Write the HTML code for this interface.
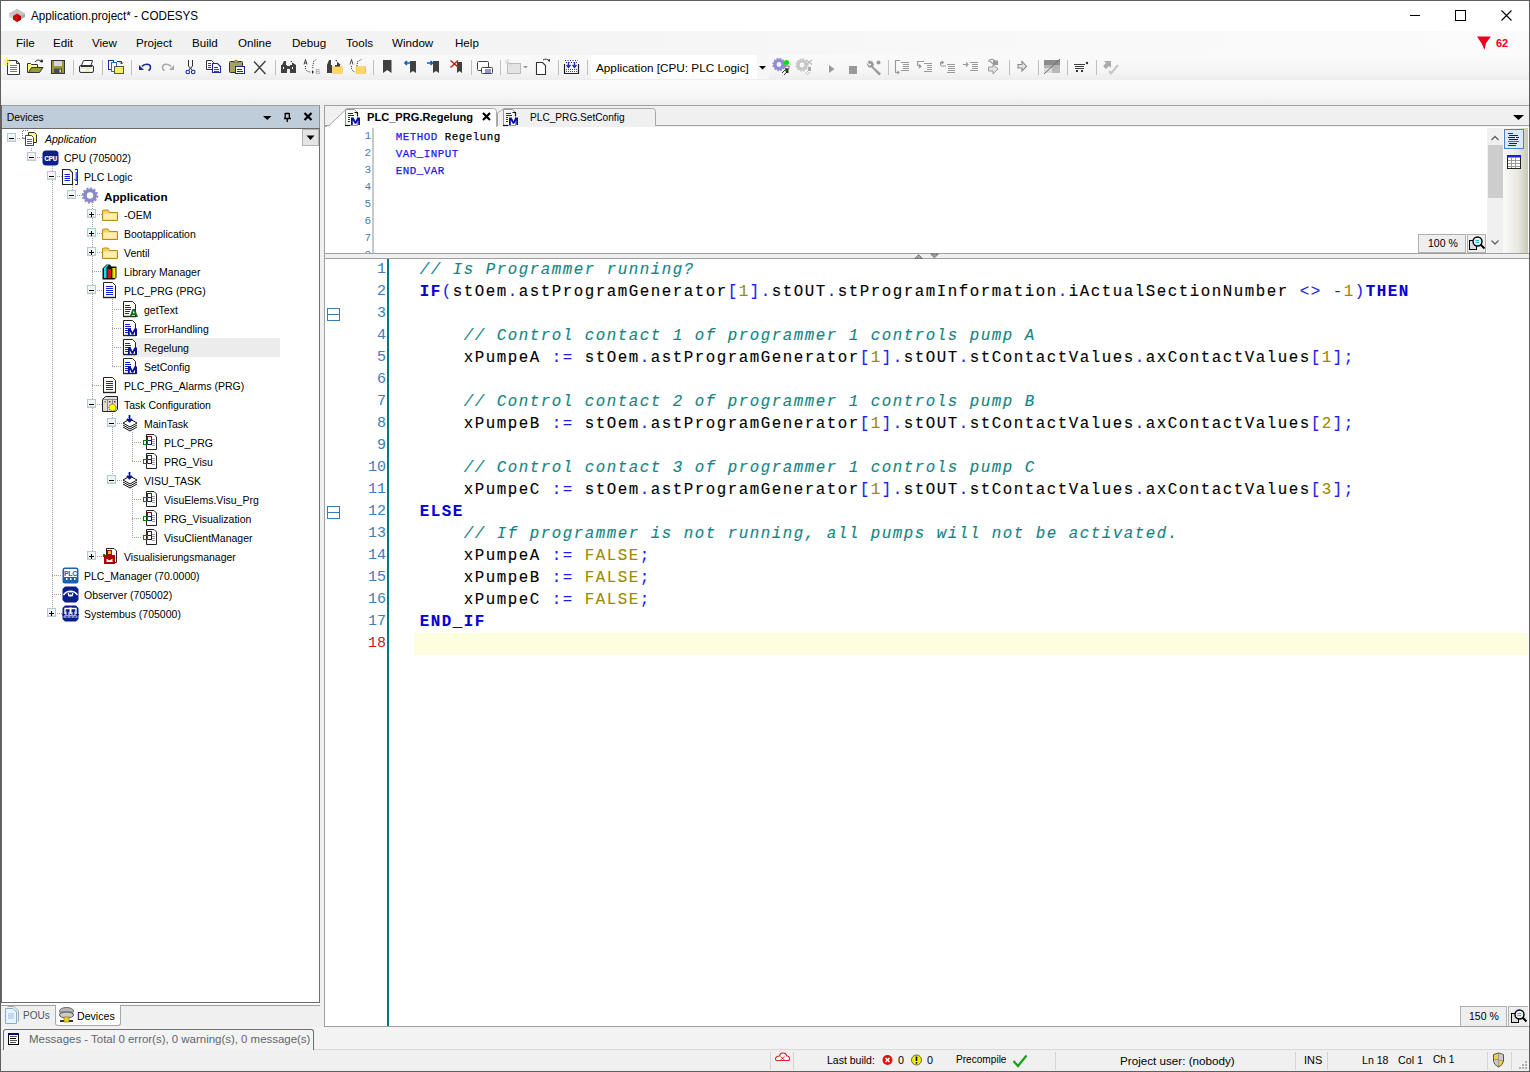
<!DOCTYPE html>
<html><head><meta charset="utf-8">
<style>
*{margin:0;padding:0;box-sizing:border-box}
html,body{width:1530px;height:1072px;overflow:hidden;background:#f0f0f0}
body{position:relative;font-family:"Liberation Sans",sans-serif;font-size:11.6px;color:#000}
.a{position:absolute}
.t{position:absolute;white-space:pre;line-height:1}
svg{position:absolute;overflow:visible}
.tr{position:absolute;white-space:pre;font-size:10.5px;line-height:1}
.code{position:absolute;white-space:pre;font-family:"Liberation Mono",monospace;font-size:18.33px;line-height:22px;left:420px}
.kw{color:#0000d8;font-weight:bold}
.cm{color:#138484;font-style:italic}
.op{color:#1c1ce8}
.nm{color:#9a8a00}
</style></head><body>

<!-- title bar -->
<div class="a" style="left:0;top:0;width:1530px;height:31px;background:#fff"></div>
<div class="a" style="left:0;top:31px;width:1530px;height:24px;background:linear-gradient(90deg,#efefef,#f8f8f8 60%,#fbfbfb)"></div>
<div class="a" style="left:0;top:55px;width:1530px;height:25px;background:linear-gradient(#fafafa,#f6f6f6 60%,#ededed)"></div>
<div class="a" style="left:0;top:80px;width:1530px;height:25px;background:linear-gradient(#fbfbfb,#f7f7f7 60%,#eeeeee)"></div>
<svg style="left:0;top:0" width="30" height="30">
 <polygon points="9,13.5 17,9 25,13.5 25,17 17,21.5 9,17" fill="#d0d0d0"/>
 <polygon points="17,18 25,13.5 25,17 17,21.5" fill="#a8a8a8"/>
 <polygon points="9,13.5 17,9 25,13.5 17,18" fill="#c4c4c4"/>
 <polygon points="13,16 17,13.5 21,16 21,19.5 17,22 13,19.5" fill="#d80000"/>
 <polygon points="17,16.5 21,16 21,19.5 17,22" fill="#a80000"/>
</svg>
<div class="t" style="left:30.5px;top:9.5px;font-size:12.4px;transform:scaleX(0.94);transform-origin:0 0">Application.project* - CODESYS</div>
<div class="a" style="left:1410px;top:15px;width:10px;height:1px;background:#000"></div>
<div class="a" style="left:1455px;top:10px;width:11px;height:11px;border:1px solid #000"></div>
<svg style="left:1500px;top:9px" width="12" height="12"><path d="M1.5 1.5L11.5 11.5M11.5 1.5L1.5 11.5" stroke="#000" stroke-width="1.1"/></svg>
<div class="t" style="left:16px;top:37px">File</div>
<div class="t" style="left:53px;top:37px">Edit</div>
<div class="t" style="left:92px;top:37px">View</div>
<div class="t" style="left:136px;top:37px">Project</div>
<div class="t" style="left:192px;top:37px">Build</div>
<div class="t" style="left:238px;top:37px">Online</div>
<div class="t" style="left:292px;top:37px">Debug</div>
<div class="t" style="left:346px;top:37px">Tools</div>
<div class="t" style="left:392px;top:37px">Window</div>
<div class="t" style="left:455px;top:37px">Help</div>
<svg style="left:1476px;top:35px" width="16" height="16"><path d="M1 1.5H15L10 8L8.5 15L6 9Z" fill="#e8001c"/></svg>
<div class="t" style="left:1496px;top:38px;font-weight:bold;color:#e8001c;font-size:11px">62</div>

<svg style="left:0;top:0" width="1530" height="105" viewBox="0 0 1530 105">
<!-- new -->
<path d="M7.5 60.5H16.5L19.5 63.5V74.5H7.5Z" fill="#fff" stroke="#333"/>
<path d="M16.5 60.5V63.5H19.5" fill="none" stroke="#333"/>
<path d="M10 65.5H17M10 67.5H17M10 69.5H17M10 71.5H17" stroke="#777"/>
<path d="M4 59L10 65M4 65L10 59M3 62H11M7 58V66" stroke="#ffee00" stroke-width="1" stroke-dasharray="1.2 .8"/>
<!-- open -->
<path d="M27.5 63.5H30.5L31.5 64.5H37.5V72.5H27.5Z" fill="#ffff80" stroke="#333"/>
<path d="M28.5 72.5L31.5 67.5H43L39.5 72.5Z" fill="#9a9a30" stroke="#333"/>
<path d="M35 62C37 59.5 40 59.5 41.5 62" fill="none" stroke="#222"/>
<path d="M40 61.5L42.5 62L42 59.5" fill="#222" stroke="#222"/>
<!-- save -->
<rect x="51.5" y="60.5" width="13" height="13" fill="#9a9a30" stroke="#333"/>
<rect x="54" y="61" width="8" height="5" fill="#d6d6d6"/>
<rect x="54" y="68.5" width="8" height="5" fill="#4a4a4a"/>
<rect x="59.5" y="69.5" width="1.5" height="3" fill="#ddd"/>
<!-- sep -->
<rect x="73" y="60" width="1" height="15" fill="#c0c0c0"/>
<!-- print -->
<path d="M83.5 60.5H92.5L91 65.5H81.5Z" fill="#fff" stroke="#333"/>
<rect x="79.5" y="65.5" width="14" height="7" rx="1.5" fill="#e8e8e8" stroke="#333"/>
<rect x="81" y="69" width="11" height="2" fill="#fff"/>
<rect x="86" y="69.5" width="3" height="1" fill="#ee0"/>
<path d="M81 66.5H92" stroke="#333"/>
<!-- sep -->
<rect x="102" y="60" width="1" height="15" fill="#c0c0c0"/>
<!-- paste special -->
<rect x="108.5" y="60.5" width="5" height="9" fill="#fff" stroke="#1830a0"/>
<rect x="111.5" y="62.5" width="5" height="9" fill="#fff" stroke="#1a70d0"/>
<rect x="114.5" y="66.5" width="9" height="7" fill="#f2f060" stroke="#555"/>
<path d="M117 61.5H121.5V63.5M120 62.5L121.5 64L123 62.5" fill="none" stroke="#333"/>
<rect x="131" y="60" width="1" height="15" fill="#c0c0c0"/>
<!-- undo -->
<path d="M142 66.5C144 63.5 150.5 63 150.5 67.5C150.5 69 149.5 70 148.5 70.5" fill="none" stroke="#1a2a8a" stroke-width="1.6"/>
<path d="M139 65V70H144Z" fill="#1a2a8a"/>
<!-- redo -->
<path d="M171 66.5C169 63.5 162.5 63 162.5 67.5C162.5 69 163.5 70 164.5 70.5" fill="none" stroke="#aaa" stroke-width="1.6"/>
<path d="M174 65V70H169Z" fill="#aaa"/>
<!-- cut -->
<path d="M188.5 60V66L190.5 68.5M192.5 60V66L190.5 68.5" fill="none" stroke="#333"/>
<circle cx="187.8" cy="72" r="1.8" fill="none" stroke="#1a2aa0" stroke-width="1.1"/>
<circle cx="193.2" cy="72" r="1.8" fill="none" stroke="#1a2aa0" stroke-width="1.1"/>
<path d="M189 70L190.5 68M192 70L190.5 68" stroke="#1a2aa0"/>
<!-- copy -->
<path d="M206.5 60.5H211.5L213.5 62.5V69.5H206.5Z" fill="#fff" stroke="#333"/>
<path d="M208 63.5H211M208 65.5H211M208 67.5H211" stroke="#444"/>
<path d="M212.5 63.5H217.5L220.5 66.5V72.5H212.5Z" fill="#fff" stroke="#1a2aa0" stroke-width="1.1"/>
<path d="M214 67.5H218M214 69.5H219M214 71.5H219" stroke="#444"/>
<!-- paste -->
<rect x="229.5" y="61.5" width="13" height="11" rx="1" fill="#a8a060" stroke="#333"/>
<path d="M233 62L236 60L239 62Z" fill="#ee0" stroke="#333" stroke-width=".6"/>
<rect x="235.5" y="66.5" width="9" height="7" fill="#fff" stroke="#1a2aa0"/>
<path d="M237 69.5H242M237 71.5H243" stroke="#1a2aa0"/>
<!-- delete -->
<path d="M254 61.5L265.5 74M265.5 61L254.5 73" stroke="#404040" stroke-width="1.4"/>
<rect x="275" y="60" width="1" height="15" fill="#c0c0c0"/>
<!-- find -->
<path d="M282 65H286V61H284Z M290 61H292V65H296Z" fill="#404040"/>
<rect x="281" y="65" width="6" height="8" fill="#404040"/>
<rect x="290" y="65" width="6" height="8" fill="#404040"/>
<rect x="286" y="66" width="5" height="3" fill="#404040"/>
<rect x="283" y="67" width="1" height="2" fill="#fff"/><rect x="292" y="67" width="1" height="2" fill="#fff"/>
<!-- replace -->
<path d="M304 64.5L305.5 59.5L307 64.5M304.5 63H306.5" fill="none" stroke="#333" stroke-width=".9"/>
<path d="M305.5 66C305 70 307 72 311 72" fill="none" stroke="#333" stroke-dasharray="1 1"/>
<path d="M312 70L314 72L312 74Z" fill="#333"/>
<path d="M313.5 63C312.5 65 312.5 68 313.5 69M313 62L316.5 59.5" fill="none" stroke="#333" stroke-dasharray="1 1"/>
<text x="315.5" y="73.5" font-family="Liberation Sans" font-size="7" fill="#999">B</text>
<!-- find in project -->
<path d="M327 65H331V60H329Z M335 60H337V65H341Z" fill="#404040"/>
<rect x="327" y="65" width="5" height="8" fill="#404040"/>
<rect x="335" y="65" width="5" height="5" fill="#404040"/>
<rect x="332.5" y="66.5" width="10" height="7" fill="#f0b030"/>
<rect x="333" y="67" width="9" height="6" fill="#ffd860"/>
<!-- replace in project -->
<path d="M350 64.5L351.5 59.5L353 64.5" fill="none" stroke="#333" stroke-width=".9"/>
<path d="M351.5 66C351 69 352 71 355 72" fill="none" stroke="#333" stroke-dasharray="1 1"/>
<path d="M357.5 63C356.5 65 357 66 357.5 67M357 62L361.5 59.5" fill="none" stroke="#333" stroke-dasharray="1 1"/>
<rect x="356" y="66.5" width="10" height="7" fill="#f0b030"/>
<rect x="356.5" y="67" width="9" height="6" fill="#ffd860"/>
<rect x="373" y="60" width="1" height="15" fill="#c0c0c0"/>
<!-- bookmarks -->
<path d="M383 60H391.5V73L387.25 70L383 73Z" fill="#404040"/>
<path d="M410 61H416V73L413 71L410 73Z" fill="#404040"/>
<path d="M405 63H410M407 61L405 63L407 65" fill="none" stroke="#0a60b8" stroke-width="1.6"/>
<path d="M433 61H439V73L436 71L433 73Z" fill="#404040"/>
<path d="M427 63H432.5M430.5 61L432.5 63L430.5 65" fill="none" stroke="#0a60b8" stroke-width="1.6"/>
<path d="M457 62H462V73L459.5 71L457 73Z" fill="#404040"/>
<path d="M450.5 60.5L458 67M458 60.5L450.5 67.5" stroke="#b82010" stroke-width="1.4"/>
<rect x="471" y="60" width="1" height="15" fill="#c0c0c0"/>
<!-- 476-493 -->
<rect x="477.5" y="61.5" width="11" height="9" rx="1" fill="#fff" stroke="#444"/>
<rect x="481.5" y="67.5" width="11" height="6" rx="1" fill="#fff" stroke="#444"/>
<path d="M485 70H491M485 72H491" stroke="#2030b0"/>
<rect x="500" y="60" width="1" height="15" fill="#c0c0c0"/>
<!-- disabled table -->
<rect x="507.5" y="63.5" width="13" height="10" fill="#e4e4e4" stroke="#bbb"/>
<path d="M505 60L512 66M508 59V64M505 63H510" stroke="#ccc"/>
<path d="M523 66H528L525.5 68.5Z" fill="#999"/>
<!-- page rotate -->
<path d="M536.5 62.5H542.5L545.5 65.5V74.5H536.5Z" fill="#fff" stroke="#333" stroke-width="1.1"/>
<path d="M543 60C545 58.5 548 59 549 61" fill="none" stroke="#333"/>
<path d="M547.5 60L550 62V59Z" fill="#333"/>
<rect x="558" y="60" width="1" height="15" fill="#c0c0c0"/>
<!-- 564-579 -->
<path d="M564.5 64V73.5H578.5V64" fill="none" stroke="#222" stroke-width="1.2"/>
<path d="M566 69.5H577M566 71.5H577" stroke="#555" stroke-dasharray="1 1"/>
<path d="M565 60.5H578M566 62.5H577" stroke="#2030b0" stroke-dasharray="1 1.5"/>
<path d="M568.5 62V67M566.5 65L568.5 67.5L570.5 65M574.5 62V67M572.5 65L574.5 67.5L576.5 65" fill="none" stroke="#2030b0" stroke-width="1.3"/>
<rect x="587" y="60" width="1" height="15" fill="#c0c0c0"/>
<!-- combo -->
<rect x="591" y="55" width="178" height="24" fill="#fff"/>
<rect x="757" y="55" width="12" height="24" fill="#f6f6f6"/>
<path d="M759 66H766L762.5 69.5Z" fill="#000"/>
<!-- gear online -->
<circle cx="779" cy="64.5" r="4.1" fill="none" stroke="#8e8ed8" stroke-width="3.4"/>
<circle cx="779" cy="64.5" r="6" fill="none" stroke="#8e8ed8" stroke-width="1.4" stroke-dasharray="1.7 1.44"/>
<circle cx="786.5" cy="62.5" r="2.5" fill="#00e000"/>
<rect x="785" y="66" width="4" height="2.5" fill="#fff" stroke="#333" stroke-width=".7"/>
<path d="M785 69H788.5V73H786Z" fill="#333"/>
<path d="M782 73L785 70M784 75L787 72" stroke="#222" stroke-width=".9"/>
<!-- gear disabled -->
<circle cx="802" cy="65" r="4.1" fill="none" stroke="#c8c8c8" stroke-width="3.4"/>
<circle cx="802" cy="65" r="6" fill="none" stroke="#c8c8c8" stroke-width="1.4" stroke-dasharray="1.7 1.44"/>
<path d="M806.5 60L812 64.5M812 60L806.5 64.5" stroke="#bbb" stroke-width="1.2"/>
<path d="M808 67H811V71H808Z" fill="#aaa"/>
<path d="M805 74L808 71M807 75L810 72" stroke="#bbb" stroke-width=".9"/>
<!-- play stop -->
<path d="M829 65V73L834.5 69Z" fill="#999"/>
<rect x="849" y="66" width="8" height="8" fill="#999"/>
<!-- wrench -->
<path d="M866.5 63.5L869 60.5L872.5 61.5L874 64.5L873 66.5L881 73.5L879 75.5L871.5 67.5L868.5 67.5Z" fill="#9a9a9a"/><path d="M867 62.5L869.5 65L871 64" fill="none" stroke="#f4f4f4" stroke-width="1.2"/>
<circle cx="878.5" cy="62.5" r="2" fill="#9a9a9a"/>
<rect x="888" y="60" width="1" height="15" fill="#c0c0c0"/>
<!-- step icons gray -->
<g stroke="#999" fill="none" stroke-width="1.1">
<path d="M900 60.5H895.5V72.5H898.5M897.5 71L899 72.5L897.5 74"/>
<path d="M901 62.5H909M903 64.5H909M903 66.5H909M903 68.5H909M901 70.5H909"/>
<path d="M924 61.5H917.5V65.5L920 66.5M919 64.5L921 66.5L919 68"/>
<path d="M924 63.5H932M927 65.5H932M927 67.5H932M927 69.5H932M924 71.5H932"/>
<path d="M941 66H946M940.5 65.5V62.5H943M941.5 61L943.5 62.5L941.5 64"/>
<path d="M947 64.5H955M948 66.5H955M948 68.5H955M948 70.5H955M947 72.5H955"/>
<path d="M963 64.5H968M966 62.5L968 64.5L966 66.5"/>
<path d="M970 62.5H978M972 64.5H978M972 66.5H978M972 68.5H978M970 70.5H978"/>
</g>
<path d="M989 62C988 60 991 59 993 59.5L995 61M993 64L990 61" fill="none" stroke="#999" stroke-width="1.1"/>
<path d="M993 60.5H998V65H993Z" fill="#999"/>
<path d="M988.5 67H993V64.5L998 69L993 74V71H988.5Z" fill="#e6e6e6" stroke="#999"/>
<rect x="1009" y="60" width="1" height="15" fill="#c0c0c0"/>
<path d="M1018 64.5H1022V61.5L1026.5 66.5L1022 71V68H1018Z" fill="#e6e6e6" stroke="#8a8a8a" stroke-width="1.1"/>
<rect x="1038" y="60" width="1" height="15" fill="#c0c0c0"/>
<!-- 1044-1060 -->
<rect x="1044" y="60" width="16" height="5" fill="#8c8c8c"/>
<rect x="1044" y="65" width="16" height="3" fill="#b4b4b4"/>
<rect x="1044" y="68" width="16" height="5" fill="#dcdcdc"/>
<rect x="1052" y="68" width="8" height="5" fill="#b8b8b8"/>
<path d="M1044 74L1060 59" stroke="#6a6a6a" stroke-width="1"/>
<rect x="1067" y="60" width="1" height="15" fill="#c0c0c0"/>
<path d="M1074 64.5H1085M1075 66.5H1084M1075 68.5H1084" stroke="#404040" stroke-width="1.1"/>
<circle cx="1087" cy="63" r="1.2" fill="#303030"/>
<rect x="1076" y="70" width="2" height="2" fill="#303030"/><rect x="1081" y="70" width="2" height="2" fill="#303030"/>
<rect x="1096" y="60" width="1" height="15" fill="#c0c0c0"/>
<path d="M1104 61H1111V68L1109 66L1106 69L1103 66L1106 63Z" fill="#acacac"/>
<path d="M1109 71L1111 73.5L1118 65" fill="none" stroke="#c8c8c8" stroke-width="2.2"/>
</svg>

<div class="t" style="left:596px;top:62px;font-size:11.76px">Application [CPU: PLC Logic]</div>

<div class="a" style="left:1px;top:105px;width:319px;height:24px;background:#bfcddb;border-top:1px solid #a0a0a0;border-right:1px solid #909090"></div>
<div class="a" style="left:1px;top:128px;width:319px;height:1px;background:#696969"></div>
<div class="a" style="left:1px;top:129px;width:319px;height:874px;background:#fff;border-right:1px solid #6e6e6e;border-bottom:1px solid #6e6e6e"></div>
<div class="t" style="left:6.8px;top:113px;font-size:10.4px">Devices</div>
<div class="a" style="left:302px;top:129px;width:17px;height:17px;background:#e4e4e4;border:1px solid #b4b4b4"></div>
<div class="a" style="left:122px;top:338px;width:158px;height:19px;background:#ececec"></div>
<div class="tr" style="left:44px;top:134px;font-style:italic;margin-left:1px;">Application</div>
<div class="tr" style="left:64px;top:153px;">CPU (705002)</div>
<div class="tr" style="left:84px;top:172px;">PLC Logic</div>
<div class="tr" style="left:104px;top:191px;font-weight:bold;font-size:11.7px;">Application</div>
<div class="tr" style="left:124px;top:210px;">-OEM</div>
<div class="tr" style="left:124px;top:229px;">Bootapplication</div>
<div class="tr" style="left:124px;top:248px;">Ventil</div>
<div class="tr" style="left:124px;top:267px;">Library Manager</div>
<div class="tr" style="left:124px;top:286px;">PLC_PRG (PRG)</div>
<div class="tr" style="left:144px;top:305px;">getText</div>
<div class="tr" style="left:144px;top:324px;">ErrorHandling</div>
<div class="tr" style="left:144px;top:343px;">Regelung</div>
<div class="tr" style="left:144px;top:362px;">SetConfig</div>
<div class="tr" style="left:124px;top:381px;">PLC_PRG_Alarms (PRG)</div>
<div class="tr" style="left:124px;top:400px;">Task Configuration</div>
<div class="tr" style="left:144px;top:419px;">MainTask</div>
<div class="tr" style="left:164px;top:438px;">PLC_PRG</div>
<div class="tr" style="left:164px;top:457px;">PRG_Visu</div>
<div class="tr" style="left:144px;top:476px;">VISU_TASK</div>
<div class="tr" style="left:164px;top:495px;">VisuElems.Visu_Prg</div>
<div class="tr" style="left:164px;top:514px;">PRG_Visualization</div>
<div class="tr" style="left:164px;top:533px;">VisuClientManager</div>
<div class="tr" style="left:124px;top:552px;">Visualisierungsmanager</div>
<div class="tr" style="left:84px;top:571px;">PLC_Manager (70.0000)</div>
<div class="tr" style="left:84px;top:590px;">Observer (705002)</div>
<div class="tr" style="left:84px;top:609px;">Systembus (705000)</div>
<div class="a" style="left:1px;top:105px;width:1px;height:898px;background:#666"></div>
<svg style="left:0;top:0" width="330" height="640" viewBox="0 0 330 640"><path d="M263 116H271.5L267.25 120Z" fill="#000"/>
<path d="M285 113.5H289.5M285.2 113V118.5M289.3 113V118.5M284 118.5H291M287.25 118.5V122" fill="none" stroke="#000" stroke-width="1.3"/>
<path d="M304.5 113L311.5 120M311.5 113L304.5 120" stroke="#000" stroke-width="2.2"/>
<path d="M306.5 135.5H314.5L310.5 140Z" fill="#000"/>
<path d="M31.5 148V153" stroke="#a0a0a0" stroke-dasharray="1 1"/>
<path d="M52.5 166V609" stroke="#a0a0a0" stroke-dasharray="1 1"/>
<path d="M72.5 185V191" stroke="#a0a0a0" stroke-dasharray="1 1"/>
<path d="M92.5 204V552" stroke="#a0a0a0" stroke-dasharray="1 1"/>
<path d="M112.5 295V367" stroke="#a0a0a0" stroke-dasharray="1 1"/>
<path d="M112.5 413V476" stroke="#a0a0a0" stroke-dasharray="1 1"/>
<path d="M132.5 432V462" stroke="#a0a0a0" stroke-dasharray="1 1"/>
<path d="M132.5 489V538" stroke="#a0a0a0" stroke-dasharray="1 1"/>
<path d="M17 138.5H21" stroke="#a0a0a0" stroke-dasharray="1 1"/>
<rect x="7.5" y="133.5" width="8" height="8" fill="#f4f4f4" stroke="#a8cfd4"/>
<path d="M8 141H15" stroke="#c8c8c8"/>
<path d="M9 138.5H14" stroke="#000"/>
<g transform="translate(21,130)"><path d="M1.5 8V.5H8" fill="none" stroke="#777" stroke-dasharray="1 1"/><path d="M7.5 2.5H13.5L15.5 4.5V12.5H7.5Z" fill="#ffff60" stroke="#333"/><path d="M9 4L14 10M9 7L12 11M11 4L14 7" stroke="#fff" stroke-width=".8"/><path d="M1 8.5H4.5" stroke="#777"/><path d="M4.5 5.5H10.5L12.5 7.5V15.5H4.5Z" fill="#fff" stroke="#444"/><path d="M6 9.5H11M6 11.5H11M6 13.5H11" stroke="#666"/></g>
<path d="M37 157.5H42" stroke="#a0a0a0" stroke-dasharray="1 1"/>
<rect x="27.5" y="152.5" width="8" height="8" fill="#f4f4f4" stroke="#a8cfd4"/>
<path d="M28 160H35" stroke="#c8c8c8"/>
<path d="M29 157.5H34" stroke="#000"/>
<g transform="translate(42,149)"><rect x=".5" y="1.5" width="16" height="15" rx="3.5" fill="#0a1e8c"/><text x="8.5" y="12" text-anchor="middle" font-family="Liberation Mono" font-weight="bold" font-size="8" fill="#fff" letter-spacing="-.6">CPU</text></g>
<path d="M57 176.5H62" stroke="#a0a0a0" stroke-dasharray="1 1"/>
<rect x="47.5" y="171.5" width="8" height="8" fill="#f4f4f4" stroke="#a8cfd4"/>
<path d="M48 179H55" stroke="#c8c8c8"/>
<path d="M49 176.5H54" stroke="#000"/>
<g transform="translate(62,168)"><path d="M.5 1.5H7.5L10.5 4.5V16.5H.5Z" fill="#fff" stroke="#222" stroke-width="1.1"/><path d="M2.5 6.5H8M2.5 8.5H8M2.5 10.5H8M2.5 12.5H8" stroke="#1020e0"/><path d="M13 1.5H15.5V16.5H13M14.2 4V12.5M12.5 11L14.2 13L16 11" fill="none" stroke="#1020e0" stroke-width="1"/></g>
<path d="M77 195.5H82" stroke="#a0a0a0" stroke-dasharray="1 1"/>
<rect x="67.5" y="190.5" width="8" height="8" fill="#f4f4f4" stroke="#a8cfd4"/>
<path d="M68 198H75" stroke="#c8c8c8"/>
<path d="M69 195.5H74" stroke="#000"/>
<g transform="translate(82,187)"><circle cx="8" cy="8.5" r="5" fill="none" stroke="#8a8ac8" stroke-width="3.6"/><circle cx="8" cy="8.5" r="7" fill="none" stroke="#8a8ac8" stroke-width="2.2" stroke-dasharray="2 1.66"/></g>
<path d="M97 214.5H102" stroke="#a0a0a0" stroke-dasharray="1 1"/>
<rect x="87.5" y="209.5" width="8" height="8" fill="#f4f4f4" stroke="#a8cfd4"/>
<path d="M88 217H95" stroke="#c8c8c8"/>
<path d="M89 214.5H94" stroke="#000"/>
<path d="M91.5 212V217" stroke="#000"/>
<g transform="translate(102,206)"><path d="M.5 4.5V14.5H15.5V6.5H7.5L6 4H2Z" fill="#f8d060" stroke="#b88a20"/><path d="M1.5 7.5H14.5V13.5H1.5Z" fill="#fff0b0"/></g>
<path d="M97 233.5H102" stroke="#a0a0a0" stroke-dasharray="1 1"/>
<rect x="87.5" y="228.5" width="8" height="8" fill="#f4f4f4" stroke="#a8cfd4"/>
<path d="M88 236H95" stroke="#c8c8c8"/>
<path d="M89 233.5H94" stroke="#000"/>
<path d="M91.5 231V236" stroke="#000"/>
<g transform="translate(102,225)"><path d="M.5 4.5V14.5H15.5V6.5H7.5L6 4H2Z" fill="#f8d060" stroke="#b88a20"/><path d="M1.5 7.5H14.5V13.5H1.5Z" fill="#fff0b0"/></g>
<path d="M97 252.5H102" stroke="#a0a0a0" stroke-dasharray="1 1"/>
<rect x="87.5" y="247.5" width="8" height="8" fill="#f4f4f4" stroke="#a8cfd4"/>
<path d="M88 255H95" stroke="#c8c8c8"/>
<path d="M89 252.5H94" stroke="#000"/>
<path d="M91.5 250V255" stroke="#000"/>
<g transform="translate(102,244)"><path d="M.5 4.5V14.5H15.5V6.5H7.5L6 4H2Z" fill="#f8d060" stroke="#b88a20"/><path d="M1.5 7.5H14.5V13.5H1.5Z" fill="#fff0b0"/></g>
<path d="M92 271.5H102" stroke="#a0a0a0" stroke-dasharray="1 1"/>
<g transform="translate(102,263)"><path d="M.5 14.5V5.5L4.5 1.5H8L9.5 3.5H14.5V14.5L12.5 16.5H.5Z" fill="#111"/><rect x="2" y="5" width="2.5" height="10" fill="#20e0f0"/><path d="M2 5L5.5 1.5H7L4 5Z" fill="#20e0f0"/><rect x="5.5" y="6" width="3.5" height="9" fill="#e01010"/><rect x="10" y="5" width="3.5" height="10" fill="#f0f000"/><rect x="10" y="5" width="1.2" height="10" fill="#909000"/></g>
<path d="M97 290.5H102" stroke="#a0a0a0" stroke-dasharray="1 1"/>
<rect x="87.5" y="285.5" width="8" height="8" fill="#f4f4f4" stroke="#a8cfd4"/>
<path d="M88 293H95" stroke="#c8c8c8"/>
<path d="M89 290.5H94" stroke="#000"/>
<g transform="translate(102,282)"><path d="M1.5 .5H10.5L13.5 3.5V15.5H1.5Z" fill="#fff" stroke="#222"/><path d="M1 15.5H14" stroke="#222" stroke-width="1.4"/><path d="M4 4.5H11M4 6.5H11M4 8.5H11M4 10.5H11M4 12.5H11" stroke="#1020e0"/></g>
<path d="M112 309.5H122" stroke="#a0a0a0" stroke-dasharray="1 1"/>
<g transform="translate(122,301)"><path d="M1.5 .5H10.5L13.5 3.5V15.5H1.5Z" fill="#fff" stroke="#222"/><path d="M1 15.5H14" stroke="#222" stroke-width="1.4"/><path d="M3 4.5H8M3 6.5H9M3 8.5H9M3 10.5H8M3 12.5H7" stroke="#1020e0"/><path d="M7.5 16L10.5 8H13L16 16H14L13.3 14H10.2L9.5 16Z M10.8 12.3H12.7L11.75 9.6Z" fill="#107010" fill-rule="evenodd"/></g>
<path d="M112 328.5H122" stroke="#a0a0a0" stroke-dasharray="1 1"/>
<g transform="translate(122,320)"><path d="M1.5 .5H10.5L13.5 3.5V15.5H1.5Z" fill="#fff" stroke="#222"/><path d="M1 15.5H14" stroke="#222" stroke-width="1.4"/><path d="M3 4.5H8M3 6.5H9M3 8.5H9M3 10.5H8M3 12.5H7" stroke="#1020e0"/><path d="M6 16V8.5H8.6L10.5 12.2L12.4 8.5H15V16H13.2V11.2L11.2 14.8H9.8L7.8 11.2V16Z" fill="#0a1490"/></g>
<path d="M112 347.5H122" stroke="#a0a0a0" stroke-dasharray="1 1"/>
<g transform="translate(122,339)"><path d="M1.5 .5H10.5L13.5 3.5V15.5H1.5Z" fill="#fff" stroke="#222"/><path d="M1 15.5H14" stroke="#222" stroke-width="1.4"/><path d="M3 4.5H8M3 6.5H9M3 8.5H9M3 10.5H8M3 12.5H7" stroke="#1020e0"/><path d="M6 16V8.5H8.6L10.5 12.2L12.4 8.5H15V16H13.2V11.2L11.2 14.8H9.8L7.8 11.2V16Z" fill="#0a1490"/></g>
<path d="M112 366.5H122" stroke="#a0a0a0" stroke-dasharray="1 1"/>
<g transform="translate(122,358)"><path d="M1.5 .5H10.5L13.5 3.5V15.5H1.5Z" fill="#fff" stroke="#222"/><path d="M1 15.5H14" stroke="#222" stroke-width="1.4"/><path d="M3 4.5H8M3 6.5H9M3 8.5H9M3 10.5H8M3 12.5H7" stroke="#1020e0"/><path d="M6 16V8.5H8.6L10.5 12.2L12.4 8.5H15V16H13.2V11.2L11.2 14.8H9.8L7.8 11.2V16Z" fill="#0a1490"/></g>
<path d="M92 385.5H102" stroke="#a0a0a0" stroke-dasharray="1 1"/>
<g transform="translate(102,377)"><path d="M1.5 .5H10.5L13.5 3.5V15.5H1.5Z" fill="#fff" stroke="#222"/><path d="M1 15.5H14" stroke="#222" stroke-width="1.4"/><path d="M4 4.5H11M4 6.5H11M4 8.5H11M4 10.5H11M4 12.5H11" stroke="#1020e0"/></g>
<path d="M97 404.5H102" stroke="#a0a0a0" stroke-dasharray="1 1"/>
<rect x="87.5" y="399.5" width="8" height="8" fill="#f4f4f4" stroke="#a8cfd4"/>
<path d="M88 407H95" stroke="#c8c8c8"/>
<path d="M89 404.5H94" stroke="#000"/>
<g transform="translate(102,396)"><path d="M.5 3.5L3.5 .5H15.5V13.5L13 15.5H.5Z" fill="#ddd" stroke="#222"/><path d="M5.5 3.5V15M10.5 3.5V15M.5 3.5H15" stroke="#888"/><rect x="2.5" y="5" width="1.5" height="1.5" fill="#0c0"/><rect x="7" y="5" width="1.5" height="1.5" fill="#c00"/><rect x="12" y="5" width="1.5" height="1.5" fill="#c00"/><circle cx="10.5" cy="11.5" r="3.5" fill="#ffff00" stroke="#333" stroke-width=".8" stroke-dasharray="1.2 .8"/></g>
<path d="M117 423.5H122" stroke="#a0a0a0" stroke-dasharray="1 1"/>
<rect x="107.5" y="418.5" width="8" height="8" fill="#f4f4f4" stroke="#a8cfd4"/>
<path d="M108 426H115" stroke="#c8c8c8"/>
<path d="M109 423.5H114" stroke="#000"/>
<g transform="translate(122,415)"><path d="M1 8L8 4L15 8L8 12Z M1 10L8 14L15 10 M1 12L8 16L15 12" fill="none" stroke="#111" stroke-width="1"/><path d="M7.5 0V6M5 4L7.5 6.5L10 4" fill="none" stroke="#0a1490" stroke-width="1.8"/></g>
<path d="M132 442.5H142" stroke="#a0a0a0" stroke-dasharray="1 1"/>
<g transform="translate(142,434)"><path d="M4.5 .5H12L14.5 3V15.5H4.5Z" fill="#fff" stroke="#222"/><path d="M10 5.5H13M10 7.5H13M10 9.5H13M10 11.5H13" stroke="#999"/><rect x="5.5" y="2.5" width="4" height="4" fill="none" stroke="#a00000" stroke-width="1"/><rect x="5.5" y="6.5" width="4" height="4" fill="none" stroke="#0a1490" stroke-width="1"/><rect x="1.5" y="6.5" width="4" height="4" fill="none" stroke="#008000" stroke-width="1"/></g>
<path d="M132 461.5H142" stroke="#a0a0a0" stroke-dasharray="1 1"/>
<g transform="translate(142,453)"><path d="M4.5 .5H12L14.5 3V15.5H4.5Z" fill="#fff" stroke="#222"/><path d="M10 5.5H13M10 7.5H13M10 9.5H13M10 11.5H13" stroke="#999"/><rect x="5.5" y="2.5" width="4" height="4" fill="none" stroke="#a00000" stroke-width="1"/><rect x="5.5" y="6.5" width="4" height="4" fill="none" stroke="#0a1490" stroke-width="1"/><rect x="1.5" y="6.5" width="4" height="4" fill="none" stroke="#008000" stroke-width="1"/></g>
<path d="M117 480.5H122" stroke="#a0a0a0" stroke-dasharray="1 1"/>
<rect x="107.5" y="475.5" width="8" height="8" fill="#f4f4f4" stroke="#a8cfd4"/>
<path d="M108 483H115" stroke="#c8c8c8"/>
<path d="M109 480.5H114" stroke="#000"/>
<g transform="translate(122,472)"><path d="M1 8L8 4L15 8L8 12Z M1 10L8 14L15 10 M1 12L8 16L15 12" fill="none" stroke="#111" stroke-width="1"/><path d="M7.5 0V6M5 4L7.5 6.5L10 4" fill="none" stroke="#0a1490" stroke-width="1.8"/></g>
<path d="M132 499.5H142" stroke="#a0a0a0" stroke-dasharray="1 1"/>
<g transform="translate(142,491)"><path d="M4.5 .5H12L14.5 3V15.5H4.5Z" fill="#fff" stroke="#222"/><path d="M10 5.5H13M10 7.5H13M10 9.5H13M10 11.5H13" stroke="#999"/><rect x="5.5" y="2.5" width="4" height="4" fill="none" stroke="#a00000" stroke-width="1"/><rect x="5.5" y="6.5" width="4" height="4" fill="none" stroke="#0a1490" stroke-width="1"/><rect x="1.5" y="6.5" width="4" height="4" fill="none" stroke="#008000" stroke-width="1"/></g>
<path d="M132 518.5H142" stroke="#a0a0a0" stroke-dasharray="1 1"/>
<g transform="translate(142,510)"><path d="M4.5 .5H12L14.5 3V15.5H4.5Z" fill="#fff" stroke="#222"/><path d="M10 5.5H13M10 7.5H13M10 9.5H13M10 11.5H13" stroke="#999"/><rect x="5.5" y="2.5" width="4" height="4" fill="none" stroke="#a00000" stroke-width="1"/><rect x="5.5" y="6.5" width="4" height="4" fill="none" stroke="#0a1490" stroke-width="1"/><rect x="1.5" y="6.5" width="4" height="4" fill="none" stroke="#008000" stroke-width="1"/></g>
<path d="M132 537.5H142" stroke="#a0a0a0" stroke-dasharray="1 1"/>
<g transform="translate(142,529)"><path d="M4.5 .5H12L14.5 3V15.5H4.5Z" fill="#fff" stroke="#222"/><path d="M10 5.5H13M10 7.5H13M10 9.5H13M10 11.5H13" stroke="#999"/><rect x="5.5" y="2.5" width="4" height="4" fill="none" stroke="#a00000" stroke-width="1"/><rect x="5.5" y="6.5" width="4" height="4" fill="none" stroke="#0a1490" stroke-width="1"/><rect x="1.5" y="6.5" width="4" height="4" fill="none" stroke="#008000" stroke-width="1"/></g>
<path d="M97 556.5H102" stroke="#a0a0a0" stroke-dasharray="1 1"/>
<rect x="87.5" y="551.5" width="8" height="8" fill="#f4f4f4" stroke="#a8cfd4"/>
<path d="M88 559H95" stroke="#c8c8c8"/>
<path d="M89 556.5H94" stroke="#000"/>
<path d="M91.5 554V559" stroke="#000"/>
<g transform="translate(102,548)"><path d="M4.5 .5H12L14.5 3V14.5H4.5Z" fill="#fff" stroke="#222"/><rect x="1" y="6" width="2" height="3" fill="#080"/><path d="M2 7H13V16H2Z" fill="#b00000"/><rect x="5" y="2" width="5" height="5" fill="#b00000"/><rect x="6" y="3" width="3" height="3" fill="#f0c000"/><path d="M4.5 10.5L7.5 12.5L10.5 10.5V14H4.5Z" fill="#fff"/></g>
<path d="M52 575.5H62" stroke="#a0a0a0" stroke-dasharray="1 1"/>
<g transform="translate(62,567)"><rect x=".5" y=".5" width="16" height="16" rx="2.5" fill="#2060a8"/><rect x="2" y="2" width="13" height="13" rx="1" fill="#fff"/><text x="8.5" y="8.5" text-anchor="middle" font-family="Liberation Sans" font-weight="bold" font-size="7" fill="#2060a8" letter-spacing="-.3">PLC</text><rect x="2" y="10" width="13" height="5" fill="#2060a8"/><rect x="4" y="11" width="1.5" height="2" fill="#fff"/><rect x="8" y="11" width="1.5" height="2" fill="#fff"/><rect x="12" y="11" width="1.5" height="2" fill="#fff"/></g>
<path d="M52 594.5H62" stroke="#a0a0a0" stroke-dasharray="1 1"/>
<g transform="translate(62,586)"><path d="M3 .5H14L16.5 3V14L14 16.5H3L.5 14V3Z" fill="#0a1e8c"/><path d="M1.5 9C5 4 12 4 15.5 9" fill="none" stroke="#fff" stroke-width="1.4"/><path d="M5.5 7.5C7 6 10 6 11.5 7.5L10.5 10.5H6.5Z" fill="#fff"/><rect x="7" y="7" width="3" height="1.5" fill="#0a1e8c"/></g>
<path d="M57 613.5H62" stroke="#a0a0a0" stroke-dasharray="1 1"/>
<rect x="47.5" y="608.5" width="8" height="8" fill="#f4f4f4" stroke="#a8cfd4"/>
<path d="M48 616H55" stroke="#c8c8c8"/>
<path d="M49 613.5H54" stroke="#000"/>
<path d="M51.5 611V616" stroke="#000"/>
<g transform="translate(62,605)"><path d="M3 .5H14L16.5 3V14L14 16.5H3L.5 14V3Z" fill="#0a1e8c"/><path d="M3 3.5H14V10H3Z" fill="none" stroke="#fff" stroke-width="1.4"/><rect x="7.5" y="2.5" width="2" height="8" fill="#fff"/><path d="M1.5 12H15.5" stroke="#fff" stroke-width="1.2" stroke-dasharray="3 1"/><rect x="0" y="9" width="17" height="1.2" fill="#0a1e8c"/><path d="M4 6.5V10M13 6.5V10M7 7V10M10 7V10" stroke="#fff" stroke-width="1"/></g></svg>

<div class="a" style="left:1px;top:1003px;width:319px;height:2px;background:#fafafa"></div><div class="a" style="left:1px;top:1005px;width:319px;height:1px;background:#a0a0a0"></div>
<div class="a" style="left:55px;top:1005px;width:66px;height:21px;background:#fff;border:1px solid #a8a8a8;border-top:none;border-radius:0 0 3px 3px"></div>
<svg style="left:0;top:1000px" width="130" height="30" viewBox="0 1000 130 30">
 <path d="M5.5 1008.5H13L16.5 1012V1023.5H5.5Z" fill="#e8f4ff" stroke="#8aa8c8"/>
 <path d="M7.5 1006.5H14L18.5 1011V1021.5" fill="none" stroke="#9ab" />
 <path d="M8 1014H14M8 1016H14M8 1018H14" stroke="#9bd"/>
 <ellipse cx="66.5" cy="1011" rx="7" ry="3.5" fill="#b8b8b8" stroke="#666"/>
 <rect x="59.5" y="1011" width="14" height="4" fill="#999"/>
 <ellipse cx="66.5" cy="1015" rx="7" ry="3" fill="#ccc" stroke="#555"/>
 <path d="M60 1021H73" stroke="#333" stroke-width="2"/>
 <rect x="64" y="1017" width="5" height="5" fill="#f0d020" stroke="#806000" stroke-width=".6"/>
</svg>
<div class="t" style="left:23px;top:1011px;font-size:10px;color:#4a5468">POUs</div>
<div class="t" style="left:77px;top:1010.5px;font-size:10.6px">Devices</div>

<div class="a" style="left:324px;top:105px;width:1205px;height:922px;background:#fff;border:1px solid #a0a0a0;border-right:none"></div>
<div class="a" style="left:325px;top:106px;width:1204px;height:21px;background:#f0f0f0"></div>
<div class="a" style="left:325px;top:125px;width:1204px;height:1px;background:#a0a0a0"></div>
<svg style="left:0;top:0" width="1530" height="140" viewBox="0 0 1530 140">
<path d="M497.5 126V113L504 108.5H652.5Q655.5 108.5 655.5 111.5V126" fill="#f0f0f0" stroke="#a8a8a8"/>
<path d="M325 126.5H328L347 108.5H493.5Q496.5 108.5 496.5 111.5V126.5Z" fill="#fff" stroke="#a8a8a8"/>
<rect x="327" y="126" width="169" height="2" fill="#fff"/>
<path d="M1513 115H1524L1518.5 120Z" fill="#000"/>
<path d="M483 113L490 120M490 113L483 120" stroke="#000" stroke-width="2.2"/>
</svg>
<svg style="left:0;top:0" width="600" height="140" viewBox="0 0 600 140"><g transform="translate(345,109)"><path d="M.5 .5H9.5L12.5 3.5V16.5H.5Z" fill="#f8f8f8" stroke="#999"/><path d="M9.5 3.5H12.5V7" fill="none" stroke="#111" stroke-width="1.2"/><path d="M0 16.5H5" stroke="#111" stroke-width="1.2"/><path d="M3 4.5H8M3 6.5H9M3 8.5H5M3 10.5H5M3 12.5H5" stroke="#1020e0"/><path d="M6 16V8.5H8.6L10.5 12.2L12.4 8.5H15V16H13.2V11.2L11.2 14.8H9.8L7.8 11.2V16Z" fill="#0a1490"/></g><g transform="translate(503,109)"><path d="M.5 .5H9.5L12.5 3.5V16.5H.5Z" fill="#f8f8f8" stroke="#999"/><path d="M9.5 3.5H12.5V7" fill="none" stroke="#111" stroke-width="1.2"/><path d="M0 16.5H5" stroke="#111" stroke-width="1.2"/><path d="M3 4.5H8M3 6.5H9M3 8.5H5M3 10.5H5M3 12.5H5" stroke="#1020e0"/><path d="M6 16V8.5H8.6L10.5 12.2L12.4 8.5H15V16H13.2V11.2L11.2 14.8H9.8L7.8 11.2V16Z" fill="#0a1490"/></g></svg>
<div class="t" style="left:367px;top:112px;font-weight:bold;font-size:11.1px">PLC_PRG.Regelung</div>
<div class="t" style="left:530px;top:113px;font-size:10.15px">PLC_PRG.SetConfig</div>
<div class="a" style="left:372px;top:128px;width:2px;height:125px;background:#c8c8c8"></div>
<div class="t" style="left:331px;width:40px;text-align:right;top:131px;font-family:'Liberation Mono';font-size:11px;color:#3f7db8">1</div>
<div class="t" style="left:331px;width:40px;text-align:right;top:148px;font-family:'Liberation Mono';font-size:11px;color:#3f7db8">2</div>
<div class="t" style="left:331px;width:40px;text-align:right;top:165px;font-family:'Liberation Mono';font-size:11px;color:#3f7db8">3</div>
<div class="t" style="left:331px;width:40px;text-align:right;top:182px;font-family:'Liberation Mono';font-size:11px;color:#3f7db8">4</div>
<div class="t" style="left:331px;width:40px;text-align:right;top:199px;font-family:'Liberation Mono';font-size:11px;color:#3f7db8">5</div>
<div class="t" style="left:331px;width:40px;text-align:right;top:216px;font-family:'Liberation Mono';font-size:11px;color:#3f7db8">6</div>
<div class="t" style="left:331px;width:40px;text-align:right;top:233px;font-family:'Liberation Mono';font-size:11px;color:#3f7db8">7</div>
<div class="t" style="left:331px;width:40px;text-align:right;top:250px;font-family:'Liberation Mono';font-size:11px;color:#3f7db8">8</div>
<div class="t" style="left:395.8px;top:132px;font-family:'Liberation Mono';font-size:10.8px;letter-spacing:.52px;-webkit-text-stroke:.25px currentColor"><span style="color:#1a1af0">METHOD</span> Regelung</div>
<div class="t" style="left:395.8px;top:149px;font-family:'Liberation Mono';font-size:10.8px;letter-spacing:.52px;-webkit-text-stroke:.25px currentColor"><span style="color:#1a1af0">VAR_INPUT</span></div>
<div class="t" style="left:395.8px;top:166px;font-family:'Liberation Mono';font-size:10.8px;letter-spacing:.52px;-webkit-text-stroke:.25px currentColor"><span style="color:#1a1af0">END_VAR</span></div>
<div class="a" style="left:325px;top:253px;width:1204px;height:6px;background:#f0f0f0;border-top:1px solid #a0a0a0;border-bottom:1px solid #a0a0a0"></div>
<svg style="left:0;top:0" width="1000" height="270" viewBox="0 0 1000 270"><path d="M914.5 258.5L918.5 254.5L922.5 258.5Z" fill="#a0a0a0" stroke="#606060" stroke-dasharray="1 .6"/><path d="M930.5 254L934.5 258L938.5 254Z" fill="#a0a0a0" stroke="#606060" stroke-dasharray="1 .6"/></svg>
<div class="a" style="left:1487px;top:128px;width:16px;height:125px;background:#f0f0f0"></div>
<div class="a" style="left:1488px;top:145px;width:15px;height:53px;background:#cdcdcd"></div>
<svg style="left:0;top:0" width="1530" height="260" viewBox="0 0 1530 260">
<path d="M1491.5 140L1495 136.5L1498.5 140M1491.5 240.5L1495 244L1498.5 240.5" fill="none" stroke="#606060" stroke-width="1.3"/>
</svg>
<div class="a" style="left:1503px;top:128px;width:25px;height:125px;background:linear-gradient(90deg,#fafaf8,#e8e8e0 60%,#c8c8b8)"></div>
<svg style="left:0;top:0" width="1530" height="260" viewBox="0 0 1530 260">
<rect x="1504.5" y="129.5" width="19" height="19" fill="#dde8f8" stroke="#4a80d0"/>
<path d="M1508 133.5H1513M1509 135.5H1518M1508 137.5H1515M1516 137.5H1519M1509 139.5H1518M1508 141.5H1519M1509 143.5H1517M1508 145.5H1515" stroke="#222"/>
<path d="M1508 133.5H1513M1508 145.5H1516" stroke="#1a1af0"/><path d="M1508 141.5H1519" stroke="#10a010"/>
<rect x="1507.5" y="155.5" width="13" height="13" fill="#fff" stroke="#222"/>
<rect x="1507" y="155" width="14" height="2.5" fill="#1a1af0"/>
<path d="M1508 160.5H1520M1508 163.5H1520M1508 166.5H1520M1511.5 158V168M1515.5 158V168" stroke="#999"/>
</svg>
<div class="a" style="left:1418px;top:234px;width:48px;height:19px;background:#eeeeee;border:1px solid #b0b0b0"></div>
<div class="t" style="left:1428px;top:238px;font-size:10.5px">100 %</div>
<div class="a" style="left:1467px;top:234px;width:19px;height:19px;background:#eeeeee;border:1px solid #b0b0b0"></div>
<div class="a" style="left:414px;top:633px;width:1114px;height:22px;background:#fffde0"></div>
<div class="a" style="left:387px;top:259px;width:2px;height:767px;background:#007a7a"></div>
<div class="t" style="left:330px;width:56px;text-align:right;top:262px;font-family:'Liberation Mono';font-size:15px;color:#3f7db8">1</div>
<div class="t" style="left:419.8px;top:263px;font-family:'Liberation Mono';font-size:15.8px;letter-spacing:1.52px;-webkit-text-stroke:.12px currentColor"><span class="cm">// Is Programmer running?</span></div>
<div class="t" style="left:330px;width:56px;text-align:right;top:284px;font-family:'Liberation Mono';font-size:15px;color:#3f7db8">2</div>
<div class="t" style="left:419.8px;top:285px;font-family:'Liberation Mono';font-size:15.8px;letter-spacing:1.52px;-webkit-text-stroke:.12px currentColor"><span class="kw">IF</span><span class="op">(</span>stOem<span class="op">.</span>astProgramGenerator<span class="op">[</span><span class="nm">1</span><span class="op">]</span><span class="op">.</span>stOUT<span class="op">.</span>stProgramInformation<span class="op">.</span>iActualSectionNumber <span class="op">&lt;&gt;</span> <span class="op">-</span><span class="nm">1</span><span class="op">)</span><span class="kw">THEN</span></div>
<div class="t" style="left:330px;width:56px;text-align:right;top:306px;font-family:'Liberation Mono';font-size:15px;color:#3f7db8">3</div>
<div class="t" style="left:330px;width:56px;text-align:right;top:328px;font-family:'Liberation Mono';font-size:15px;color:#3f7db8">4</div>
<div class="t" style="left:419.8px;top:329px;font-family:'Liberation Mono';font-size:15.8px;letter-spacing:1.52px;-webkit-text-stroke:.12px currentColor">    <span class="cm">// Control contact 1 of programmer 1 controls pump A</span></div>
<div class="t" style="left:330px;width:56px;text-align:right;top:350px;font-family:'Liberation Mono';font-size:15px;color:#3f7db8">5</div>
<div class="t" style="left:419.8px;top:351px;font-family:'Liberation Mono';font-size:15.8px;letter-spacing:1.52px;-webkit-text-stroke:.12px currentColor">    xPumpeA <span class="op">:=</span> stOem<span class="op">.</span>astProgramGenerator<span class="op">[</span><span class="nm">1</span><span class="op">]</span><span class="op">.</span>stOUT<span class="op">.</span>stContactValues<span class="op">.</span>axContactValues<span class="op">[</span><span class="nm">1</span><span class="op">]</span><span class="op">;</span></div>
<div class="t" style="left:330px;width:56px;text-align:right;top:372px;font-family:'Liberation Mono';font-size:15px;color:#3f7db8">6</div>
<div class="t" style="left:330px;width:56px;text-align:right;top:394px;font-family:'Liberation Mono';font-size:15px;color:#3f7db8">7</div>
<div class="t" style="left:419.8px;top:395px;font-family:'Liberation Mono';font-size:15.8px;letter-spacing:1.52px;-webkit-text-stroke:.12px currentColor">    <span class="cm">// Control contact 2 of programmer 1 controls pump B</span></div>
<div class="t" style="left:330px;width:56px;text-align:right;top:416px;font-family:'Liberation Mono';font-size:15px;color:#3f7db8">8</div>
<div class="t" style="left:419.8px;top:417px;font-family:'Liberation Mono';font-size:15.8px;letter-spacing:1.52px;-webkit-text-stroke:.12px currentColor">    xPumpeB <span class="op">:=</span> stOem<span class="op">.</span>astProgramGenerator<span class="op">[</span><span class="nm">1</span><span class="op">]</span><span class="op">.</span>stOUT<span class="op">.</span>stContactValues<span class="op">.</span>axContactValues<span class="op">[</span><span class="nm">2</span><span class="op">]</span><span class="op">;</span></div>
<div class="t" style="left:330px;width:56px;text-align:right;top:438px;font-family:'Liberation Mono';font-size:15px;color:#3f7db8">9</div>
<div class="t" style="left:330px;width:56px;text-align:right;top:460px;font-family:'Liberation Mono';font-size:15px;color:#3f7db8">10</div>
<div class="t" style="left:419.8px;top:461px;font-family:'Liberation Mono';font-size:15.8px;letter-spacing:1.52px;-webkit-text-stroke:.12px currentColor">    <span class="cm">// Control contact 3 of programmer 1 controls pump C</span></div>
<div class="t" style="left:330px;width:56px;text-align:right;top:482px;font-family:'Liberation Mono';font-size:15px;color:#3f7db8">11</div>
<div class="t" style="left:419.8px;top:483px;font-family:'Liberation Mono';font-size:15.8px;letter-spacing:1.52px;-webkit-text-stroke:.12px currentColor">    xPumpeC <span class="op">:=</span> stOem<span class="op">.</span>astProgramGenerator<span class="op">[</span><span class="nm">1</span><span class="op">]</span><span class="op">.</span>stOUT<span class="op">.</span>stContactValues<span class="op">.</span>axContactValues<span class="op">[</span><span class="nm">3</span><span class="op">]</span><span class="op">;</span></div>
<div class="t" style="left:330px;width:56px;text-align:right;top:504px;font-family:'Liberation Mono';font-size:15px;color:#3f7db8">12</div>
<div class="t" style="left:419.8px;top:505px;font-family:'Liberation Mono';font-size:15.8px;letter-spacing:1.52px;-webkit-text-stroke:.12px currentColor"><span class="kw">ELSE</span></div>
<div class="t" style="left:330px;width:56px;text-align:right;top:526px;font-family:'Liberation Mono';font-size:15px;color:#3f7db8">13</div>
<div class="t" style="left:419.8px;top:527px;font-family:'Liberation Mono';font-size:15.8px;letter-spacing:1.52px;-webkit-text-stroke:.12px currentColor">    <span class="cm">// If programmer is not running, all pumps will not be activated.</span></div>
<div class="t" style="left:330px;width:56px;text-align:right;top:548px;font-family:'Liberation Mono';font-size:15px;color:#3f7db8">14</div>
<div class="t" style="left:419.8px;top:549px;font-family:'Liberation Mono';font-size:15.8px;letter-spacing:1.52px;-webkit-text-stroke:.12px currentColor">    xPumpeA <span class="op">:=</span> <span class="nm">FALSE</span><span class="op">;</span></div>
<div class="t" style="left:330px;width:56px;text-align:right;top:570px;font-family:'Liberation Mono';font-size:15px;color:#3f7db8">15</div>
<div class="t" style="left:419.8px;top:571px;font-family:'Liberation Mono';font-size:15.8px;letter-spacing:1.52px;-webkit-text-stroke:.12px currentColor">    xPumpeB <span class="op">:=</span> <span class="nm">FALSE</span><span class="op">;</span></div>
<div class="t" style="left:330px;width:56px;text-align:right;top:592px;font-family:'Liberation Mono';font-size:15px;color:#3f7db8">16</div>
<div class="t" style="left:419.8px;top:593px;font-family:'Liberation Mono';font-size:15.8px;letter-spacing:1.52px;-webkit-text-stroke:.12px currentColor">    xPumpeC <span class="op">:=</span> <span class="nm">FALSE</span><span class="op">;</span></div>
<div class="t" style="left:330px;width:56px;text-align:right;top:614px;font-family:'Liberation Mono';font-size:15px;color:#3f7db8">17</div>
<div class="t" style="left:419.8px;top:615px;font-family:'Liberation Mono';font-size:15.8px;letter-spacing:1.52px;-webkit-text-stroke:.12px currentColor"><span class="kw">END_IF</span></div>
<div class="t" style="left:330px;width:56px;text-align:right;top:636px;font-family:'Liberation Mono';font-size:15px;color:#c02020">18</div>
<svg style="left:0;top:0" width="400" height="800" viewBox="0 0 400 800"><rect x="327.5" y="308.5" width="12" height="12" fill="none" stroke="#3a78b8"/><path d="M328 314.5H339" stroke="#3a78b8"/></svg>
<svg style="left:0;top:0" width="400" height="800" viewBox="0 0 400 800"><rect x="327.5" y="506.5" width="12" height="12" fill="none" stroke="#3a78b8"/><path d="M328 512.5H339" stroke="#3a78b8"/></svg>
<div class="a" style="left:1460px;top:1006px;width:47px;height:20px;background:#eeeeee;border:1px solid #b0b0b0;border-bottom:none"></div>
<div class="t" style="left:1469px;top:1011px;font-size:10.5px">150 %</div>
<div class="a" style="left:1508px;top:1006px;width:20px;height:20px;background:#eeeeee;border:1px solid #b0b0b0;border-bottom:none;border-right:none"></div>
<svg style="left:0;top:0" width="1530" height="1072" viewBox="0 0 1530 1072"><g transform="translate(1468,235)"><rect x="1.5" y="5.5" width="7" height="9" fill="#ddd" stroke="#000"/><circle cx="9.5" cy="6.5" r="4.5" fill="#e8f0f0" stroke="#000" stroke-width="1.4"/><path d="M7.5 5.5H11M7.5 7.5H11" stroke="#10c0e0"/><path d="M12.5 9.5L16.5 13.5" stroke="#000" stroke-width="2"/></g><g transform="translate(1510,1008)"><rect x="1.5" y="5.5" width="7" height="9" fill="#ddd" stroke="#000"/><circle cx="9.5" cy="6.5" r="4.5" fill="#e8f0f0" stroke="#000" stroke-width="1.4"/><path d="M7.5 5.5H11M7.5 7.5H11" stroke="#10c0e0"/><path d="M12.5 9.5L16.5 13.5" stroke="#000" stroke-width="2"/></g></svg>
<!-- messages bar -->
<div class="a" style="left:1px;top:1027px;width:1528px;height:22px;background:#f3f3f3"></div>
<div class="a" style="left:1px;top:1049px;width:1528px;height:1px;background:#d9d9d9"></div>
<div class="a" style="left:3px;top:1029px;width:311px;height:21px;background:#f3f3f3;border:1px solid #707070;border-bottom:none;border-radius:3px 3px 0 0"></div>
<svg style="left:0;top:1020px" width="40" height="40" viewBox="0 1020 40 40">
<rect x="8.5" y="1033.5" width="10" height="11" fill="#fff" stroke="#000"/>
<rect x="8" y="1033" width="11" height="2" fill="#00007a"/>
<path d="M10 1036.5H17M10 1038.5H16M10 1040.5H17M10 1042.5H16" stroke="#555"/>
<path d="M10 1038.5H16" stroke="#000"/>
</svg>
<div class="t" style="left:29px;top:1033.5px;font-size:11.44px;color:#5f6570">Messages - Total 0 error(s), 0 warning(s), 0 message(s)</div>
<!-- status bar separators -->
<div class="a" style="left:770px;top:1052px;width:1px;height:18px;background:#d4d4d4"></div>
<div class="a" style="left:793px;top:1052px;width:1px;height:18px;background:#d4d4d4"></div>
<div class="a" style="left:1055px;top:1052px;width:1px;height:18px;background:#d4d4d4"></div>
<div class="a" style="left:1295px;top:1052px;width:1px;height:18px;background:#d4d4d4"></div>
<div class="a" style="left:1327px;top:1052px;width:1px;height:18px;background:#d4d4d4"></div>
<div class="a" style="left:1487px;top:1052px;width:1px;height:18px;background:#d4d4d4"></div>
<div class="a" style="left:1511px;top:1052px;width:1px;height:18px;background:#d4d4d4"></div>
<svg style="left:0;top:1040px" width="1530" height="32" viewBox="0 1040 1530 32">
<path d="M776.5 1060.5H788Q790 1060.5 789.5 1058Q789 1056 787 1056Q786 1053 783 1053Q780 1053 779.5 1056Q776 1056 775.5 1058.5Q775.5 1060.5 776.5 1060.5Z" fill="#fff" stroke="#e02030" stroke-width="1.1"/>
<path d="M780.5 1056.5L784.5 1060M784.5 1056.5L780.5 1060" stroke="#e02030" stroke-width=".9"/>
<circle cx="887.5" cy="1060" r="5" fill="#e01010"/>
<path d="M885.5 1058L889.5 1062M889.5 1058L885.5 1062" stroke="#fff" stroke-width="1.6"/>
<circle cx="916.5" cy="1060" r="5" fill="#f0f000" stroke="#444" stroke-width=".8"/>
<path d="M916.5 1056.5V1061" stroke="#000" stroke-width="1.6"/><circle cx="916.5" cy="1062.8" r=".9" fill="#000"/>
<path d="M1013.5 1061L1018 1066L1026.5 1055.5" fill="none" stroke="#18a018" stroke-width="2.2"/>
<path d="M1493.5 1054.5L1498.5 1053L1503.5 1054.5V1061Q1503 1065 1498.5 1067Q1494 1065 1493.5 1061Z" fill="#f0d040" stroke="#555"/>
<path d="M1498.5 1053V1067M1493.5 1060H1503.5" stroke="#555" stroke-width=".8"/>
<path d="M1498.5 1053.5L1503 1055V1060H1498.5Z" fill="#c8c8c8"/><path d="M1494 1060H1498.5V1066.5Q1495 1064.5 1494 1061Z" fill="#c8c8c8"/>
<g fill="#b0b0b0"><rect x="1525" y="1061" width="2" height="2"/><rect x="1522" y="1064" width="2" height="2"/><rect x="1525" y="1064" width="2" height="2"/><rect x="1519" y="1067" width="2" height="2"/><rect x="1522" y="1067" width="2" height="2"/><rect x="1525" y="1067" width="2" height="2"/></g>
</svg>
<div class="t" style="left:827px;top:1055px;font-size:10.5px">Last build:</div>
<div class="t" style="left:898px;top:1055px;font-size:10.8px">0</div>
<div class="t" style="left:927px;top:1055px;font-size:10.8px">0</div>
<div class="t" style="left:956px;top:1055px;font-size:10.1px">Precompile</div>
<div class="t" style="left:1120px;top:1055px;font-size:11.66px">Project user: (nobody)</div>
<div class="t" style="left:1304px;top:1055px;font-size:10.9px">INS</div>
<div class="t" style="left:1362px;top:1055px;font-size:10.6px">Ln 18</div>
<div class="t" style="left:1398px;top:1055px;font-size:10.7px">Col 1</div>
<div class="t" style="left:1433px;top:1055px;font-size:10.2px">Ch 1</div>

<div class="a" style="left:0;top:0;width:1530px;height:1072px;border:1px solid #5f5f5f"></div>
</body></html>
